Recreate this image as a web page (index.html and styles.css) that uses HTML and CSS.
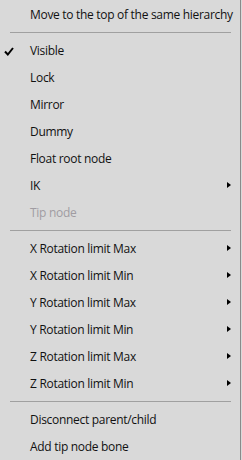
FILE: index.html
```html
<!DOCTYPE html>
<html lang="en">
<head>
    <meta charset="UTF-8">
    <title>Bone context menu</title>
    <link rel="stylesheet" href="styles.css">
</head>
<body>
    <div class="menu">
        <div class="item">Move to the top of the same hierarchy</div>
        <div class="sep"></div>
        <div class="item checked">
            <svg class="check" width="10" height="9" viewBox="0 0 10 9"><path d="M1 4.5 L3.8 7.5 L9 1" fill="none" stroke="#000" stroke-width="2"/></svg>
            Visible
        </div>
        <div class="item">Lock</div>
        <div class="item">Mirror</div>
        <div class="item">Dummy</div>
        <div class="item">Float root node</div>
        <div class="item sub">IK</div>
        <div class="item disabled">Tip node</div>
        <div class="sep"></div>
        <div class="item sub">X Rotation limit Max</div>
        <div class="item sub">X Rotation limit Min</div>
        <div class="item sub">Y Rotation limit Max</div>
        <div class="item sub">Y Rotation limit Min</div>
        <div class="item sub">Z Rotation limit Max</div>
        <div class="item sub">Z Rotation limit Min</div>
        <div class="sep"></div>
        <div class="item">Disconnect parent/child</div>
        <div class="item">Add tip node bone</div>
    </div>
</body>
</html>
```

FILE: styles.css
```css
body {
    margin: 0;
    background: #d9d9d9;
    font-family: "Open Sans", "Noto Sans", sans-serif;
    font-size: 12px;
    letter-spacing: -0.3px;
    color: #111;
}

.menu {
    width: 241px;
    height: 460px;
    box-sizing: border-box;
    padding-top: 1px;
    background: #d9d9d9;
    border-right: 1px solid #8a8a8a;
}

.item {
    position: relative;
    height: 27px;
    padding-left: 30px;
    display: flex;
    align-items: center;
    white-space: nowrap;
}

.item.disabled {
    color: #a09ca2;
}

.check {
    position: absolute;
    left: 4px;
    top: 10px;
}

/* submenu arrow */
.item.sub::after {
    content: "";
    position: absolute;
    right: 9px;
    top: 10px;
    border-left: 4px solid #000;
    border-top: 3.5px solid transparent;
    border-bottom: 3.5px solid transparent;
}

.sep {
    height: 1px;
    margin: 4px 9px 4px 10px;
    background: #a0a0a0;
}
```
